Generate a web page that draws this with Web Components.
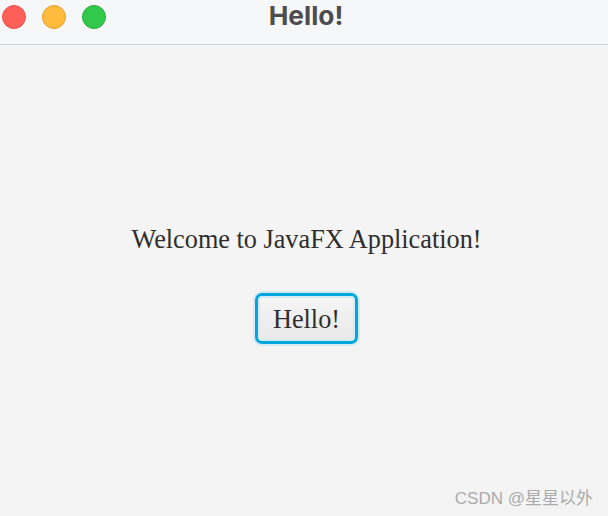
<!DOCTYPE html>
<html>
<head>
<meta charset="utf-8">
<title>Hello!</title>
<style>
  html, body { margin: 0; height: 100%; }
  body { overflow: hidden; }
</style>
</head>
<body>
<app-window title="Hello!">
  <welcome-label>Welcome to JavaFX Application!</welcome-label>
  <fx-button>Hello!</fx-button>
  <span slot="mark">CSDN @星星以外</span>
</app-window>
<script>
  class TrafficLight extends HTMLElement {
    constructor() {
      super();
      const shadow = this.attachShadow({ mode: 'open' });
      shadow.innerHTML = `
        <style>
          :host {
            display: block;
            width: 24px;
            height: 24px;
            box-sizing: border-box;
            border-radius: 50%;
            background: var(--light-color);
            border: 1px solid var(--light-border);
          }
        </style>
      `;
    }
  }
  customElements.define('traffic-light', TrafficLight);

  class AppWindow extends HTMLElement {
    constructor() {
      super();
      const shadow = this.attachShadow({ mode: 'open' });
      const title = this.getAttribute('title');
      shadow.innerHTML = `
        <style>
          :host {
            display: flex;
            flex-direction: column;
            width: 608px;
            height: 516px;
            background: #f4f4f4;
          }
          .titlebar {
            display: grid;
            grid-template-columns: 1fr auto 1fr;
            align-items: center;
            height: 45px;
            box-sizing: border-box;
            flex: none;
            background: #f6f7f9;
            border-bottom: 1px solid #d0d0d0;
          }
          .lights {
            display: flex;
            gap: 16px;
            padding: 0 0 12px 2px;
          }
          .lights traffic-light:nth-child(1) { --light-color: #ff5f57; --light-border: #e8534e; }
          .lights traffic-light:nth-child(2) { --light-color: #ffbb3c; --light-border: #e0a030; }
          .lights traffic-light:nth-child(3) { --light-color: #31c84c; --light-border: #2bac40; }
          .title {
            font: bold 26.3px Inter, "Liberation Sans", sans-serif;
            color: #4d4d4d;
            padding: 0 0 15px 4px;
          }
          .content {
            flex: 1;
            display: flex;
            flex-direction: column;
            align-items: center;
            gap: 36px;
            padding: 178px 0 0 5px;
          }
          .mark {
            display: flex;
            justify-content: flex-end;
            padding: 0 15px 7px 0;
            font: 17px "Liberation Sans", "Noto Sans CJK SC", sans-serif;
            color: #ababab;
          }
        </style>
        <div class="titlebar">
          <div class="lights">
            <traffic-light></traffic-light>
            <traffic-light></traffic-light>
            <traffic-light></traffic-light>
          </div>
          <div class="title">${title}</div>
          <div></div>
        </div>
        <div class="content"><slot></slot></div>
        <div class="mark"><slot name="mark"></slot></div>
      `;
    }
  }
  customElements.define('app-window', AppWindow);

  class WelcomeLabel extends HTMLElement {
    constructor() {
      super();
      const shadow = this.attachShadow({ mode: 'open' });
      shadow.innerHTML = `
        <style>
          :host {
            display: block;
            font: 26.25px/34px "Liberation Serif", serif;
            color: #2e2e2e;
            white-space: nowrap;
          }
        </style>
        <slot></slot>
      `;
    }
  }
  customElements.define('welcome-label', WelcomeLabel);

  class FxButton extends HTMLElement {
    constructor() {
      super();
      const shadow = this.attachShadow({ mode: 'open' });
      shadow.innerHTML = `
        <style>
          :host {
            display: block;
          }
          button {
            display: block;
            width: 103px;
            height: 51px;
            box-sizing: border-box;
            padding: 2px 0 0;
            border: 3px solid #00a6dc;
            border-radius: 7px;
            background: linear-gradient(#f6f6f6, #e8e8e8);
            box-shadow: 0 0 0 2px #d4eaf3, inset 0 0 0 2px #d6ecf4;
            font: 26.25px "Liberation Serif", serif;
            color: #2e2e2e;
          }
        </style>
        <button><slot></slot></button>
      `;
    }
  }
  customElements.define('fx-button', FxButton);
</script>
</body>
</html>
